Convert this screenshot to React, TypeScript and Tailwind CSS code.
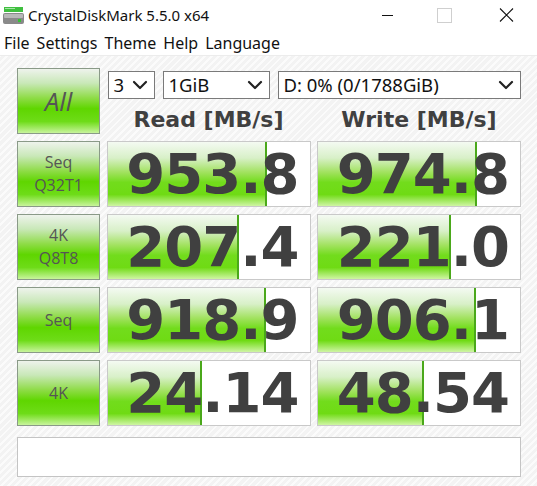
import React from "react";

interface IResult {
  value: string;
  pct: number;
}

interface IRow {
  label: string[];
  read: IResult;
  write: IResult;
}

const rows: IRow[] = [
  { label: ["Seq", "Q32T1"], read: { value: "953.8", pct: 79 }, write: { value: "974.8", pct: 78.5 } },
  { label: ["4K", "Q8T8"], read: { value: "207.4", pct: 65 }, write: { value: "221.0", pct: 66 } },
  { label: ["Seq"], read: { value: "918.9", pct: 78.5 }, write: { value: "906.1", pct: 78 } },
  { label: ["4K"], read: { value: "24.14", pct: 47 }, write: { value: "48.54", pct: 52.5 } },
];

const btnClass =
  "flex flex-col items-center justify-center border border-[#8a9a88] bg-[linear-gradient(to_bottom,#eef3ec_0%,#c9e8b8_22%,#8fdc48_45%,#5fd600_62%,#6edc18_82%,#c8f49c_100%)] text-[#555] font-['Open_Sans',sans-serif] leading-[23px]";

const Chevron = () => (
  <svg width="16" height="10" viewBox="0 0 16 10" fill="none">
    <path d="M2 2l6 6 6-6" stroke="#222" strokeWidth="2.2" strokeLinecap="round" strokeLinejoin="round" />
  </svg>
);

const Select = ({ text, width }: { text: string; width: string }) => (
  <div className={`${width} h-[28px] bg-white border border-[#7a7a7a] flex items-center justify-between pl-[5px] pr-[6px] text-[18.5px] text-[#111] font-['Noto_Sans',sans-serif]`}>
    <span className="leading-none">{text}</span>
    <Chevron />
  </div>
);

const Cell = ({ r }: { r: IResult }) => (
  <div className="relative h-[66px] bg-white border border-[#c9c9c9] overflow-hidden">
    <div
      className="absolute left-0 top-0 bottom-0 border-r-2 border-[#4aa81a] bg-[linear-gradient(to_bottom,#f4faf2_0%,#d8f0c8_25%,#a2e260_47%,#72dc1c_63%,#6fdb14_82%,#cff5a4_100%)]"
      style={{ width: `${r.pct}%` }}
    />
    <div className="relative h-full flex items-center justify-end pr-[11px] text-[56px] font-bold text-[#404040] font-['DejaVu_Sans',sans-serif] leading-none tracking-[-1px]">
      {r.value}
    </div>
  </div>
);

export default function App() {
  return (
    <div className="w-[537px] h-[486px] flex flex-col bg-white overflow-hidden font-['Noto_Sans',sans-serif]">
      {/* title bar */}
      <div className="h-[31px] flex items-center bg-white">
        <svg className="ml-[3px]" width="21" height="21" viewBox="0 0 21 21">
          <rect x="1" y="2" width="19" height="5" fill="#3fbf3f" />
          <rect x="2" y="3" width="10" height="1" fill="#a6e6a6" />
          <rect x="0" y="8" width="21" height="11" rx="2" fill="#8a8a8a" />
          <rect x="1" y="9" width="19" height="4" rx="1" fill="#b8b8b8" />
          <rect x="15" y="14" width="3" height="3" fill="#35c435" />
        </svg>
        <span className="ml-[4px] text-[15px] text-[#111]">CrystalDiskMark 5.5.0 x64</span>
        <div className="ml-auto flex items-center">
          <svg width="60" height="30" viewBox="0 0 60 30">
            <line x1="25" y1="14.5" x2="36" y2="14.5" stroke="#111" strokeWidth="1" />
          </svg>
          <svg width="60" height="30" viewBox="0 0 60 30">
            <rect x="20.5" y="7.5" width="14" height="14" fill="none" stroke="#cfcfcf" strokeWidth="1" />
          </svg>
          <svg width="60" height="30" viewBox="0 0 60 30">
            <path d="M23 7.5l13 13M36 7.5l-13 13" stroke="#111" strokeWidth="1.1" />
          </svg>
        </div>
      </div>
      {/* menu */}
      <div className="h-[25px] flex items-center gap-[7px] pl-[4px] text-[16px] text-[#111] border-b border-[#ececec]">
        <span>File</span>
        <span>Settings</span>
        <span>Theme</span>
        <span>Help</span>
        <span>Language</span>
      </div>
      {/* content */}
      <div className="flex-1 pl-[17px] pt-[12px] bg-[repeating-linear-gradient(-45deg,#f3f3f3_0px,#f3f3f3_3px,#fbfbfb_3px,#fbfbfb_5px)]">
        <div className="grid grid-cols-[83px_204px_204px] gap-x-[6.5px] gap-y-[7px]">
          <div className={`${btnClass} h-[66px] text-[26px] italic`}>All</div>
          <div className="col-span-2 h-[66px] flex flex-col">
            <div className="flex gap-[8px] mt-[3px] ml-[1px]">
              <Select text="3" width="w-[47px]" />
              <Select text="1GiB" width="w-[107px]" />
              <Select text="D: 0% (0/1788GiB)" width="w-[243px]" />
            </div>
            <div className="grid grid-cols-2 gap-x-[6.5px] mt-auto mb-[1px] text-[22px] leading-[26px] font-bold text-[#404040] font-['DejaVu_Sans',sans-serif]">
              <div className="text-center">Read [MB/s]</div>
              <div className="text-center">Write [MB/s]</div>
            </div>
          </div>
          {rows.map((row) => (
            <React.Fragment key={row.label.join("-")}>
              <div className={`${btnClass} h-[66px] text-[16px]`}>
                {row.label.map((l) => (
                  <span key={l}>{l}</span>
                ))}
              </div>
              <Cell r={row.read} />
              <Cell r={row.write} />
            </React.Fragment>
          ))}
        </div>
        <div className="mt-[11px] w-[504px] h-[40px] bg-white border border-[#c4c4c4]" />
      </div>
    </div>
  );
}
